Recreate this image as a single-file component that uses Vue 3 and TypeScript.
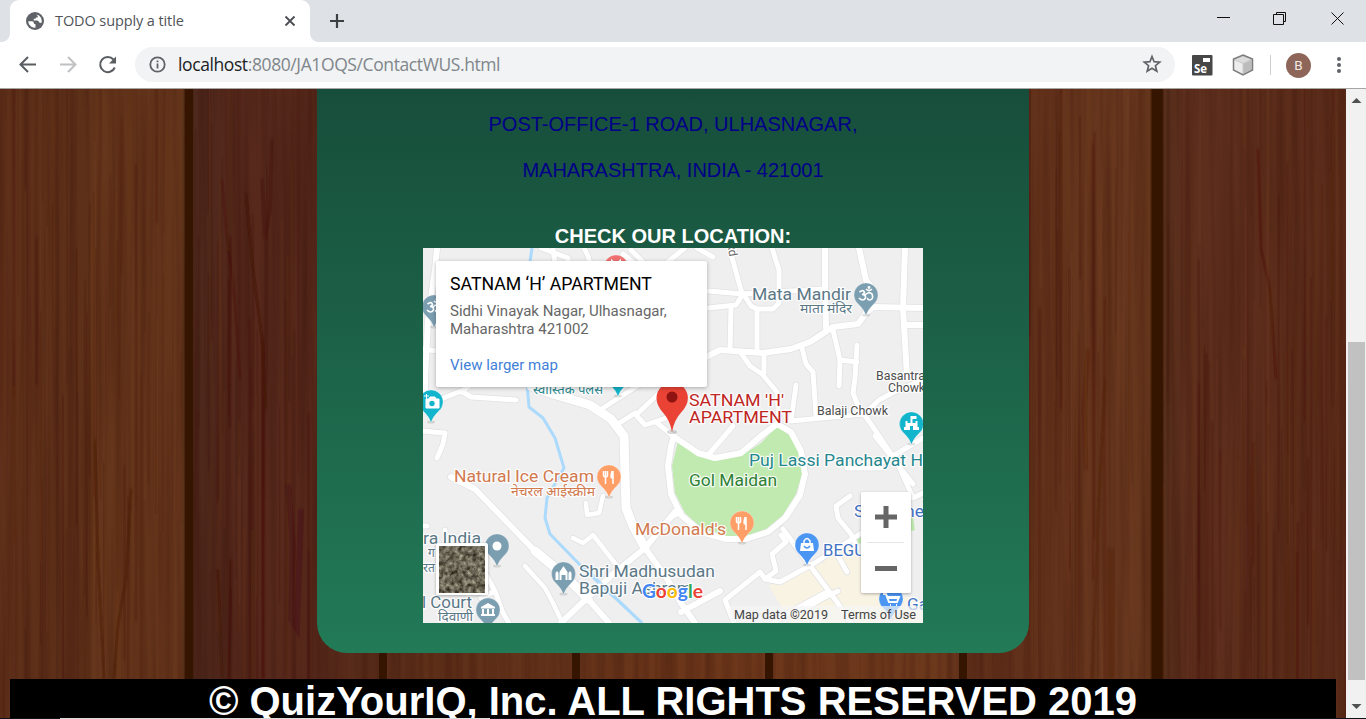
<script setup lang="ts">
interface Pin { x: number; y: number; color: string; icon: string }
interface Label { x: number; y: number; text: string; size: number; color: string; width?: number }
interface Streak { d: string; w: number; o: number; c: string }

const roads: { d: string; w: number }[] = [
  { d: 'M14 0L12 22L5 72L2 130V160', w: 6 },
  { d: 'M0 101L14 103M118 0L145 10V16M130 0L132 16M161 0L165 8L167 16M200 6L212 16M208 2L222 16M262 0L242 16M274 0L290 9', w: 5 },
  { d: 'M18 151L38 143L48 149L93 152M38 144L50 135M0 183L22 185L20 196L14 210M0 278H4', w: 5 },
  { d: 'M108 138L130 146L167 157L188 171L201 188L203 260L210 278L222 300', w: 9 },
  { d: 'M180 160L216 137M195 176L212 165M234 147L213 167L222 177L243 170', w: 5 },
  { d: 'M308 6L318 42L328 58L334 61L350 61L356 55V22L349 0', w: 5 },
  { d: 'M285 43L320 46L400 41M285 60L313 57L320 46M308 60L307 101M334 61V103', w: 5 },
  { d: 'M283 109L297 102L340 105L368 101L387 94L410 79L435 76L443 65L450 59L500 60', w: 6 },
  { d: 'M402 0V40L403 80M436 0L443 32L447 37L443 62M482 0L480 60L484 128M482 77H500', w: 6 },
  { d: 'M410 82L417 112L416 138M417 112L434 114M434 97L432 130L430 145L435 158L441 166L456 152L475 142L500 132', w: 5 },
  { d: 'M379 100L383 116L390 124L393 168M318 105L327 118L339 126L354 144L356 174M341 107V125', w: 5 },
  { d: 'M373 137L368 173L441 166L456 188L476 218L490 250L500 245M452 188L490 236M500 190L460 214M458 220L424 220', w: 5 },
  { d: 'M28 229L52 241L80 270L112 303L142 328L165 351L186 375', w: 6 },
  { d: 'M112 303L142 328L165 351', w: 9 },
  { d: 'M252 264L222 300L190 326L163 351L138 375M222 300L245 332L258 355L272 375M258 364L297 343', w: 6 },
  { d: 'M102 318L122 340L130 355L138 372M150 290L160 295L170 287L184 305L196 320M163 255L164 267L176 265L180 248', w: 4.5 },
  { d: 'M62 325L72 343L80 365L86 375M58 350L72 343M22 282V294', w: 5 },
  { d: 'M250 188L275 205L292 210L318 205L338 188L354 176L368 184L378 203L382 226L377 247L362 270L345 284L323 291L303 291L278 284L258 267L248 246L245 218L248 198L251 188', w: 6 },
  { d: 'M250 188L233 174M286 206L310 178M250 268L258 264', w: 5 },
  { d: 'M360 281L385 315L414 354L428 375M358 287L363 294L349 306L353 323L342 331L337 324L302 352L311 375M342 331L357 334L390 316L440 284L485 262', w: 5 },
  { d: 'M427 248L413 258L415 270L428 286L434 300M414 306L424 324M402 345L367 364L350 375M415 343L400 350L380 362', w: 5 },
]
const pins: Pin[] = [
  { x: 193, y: 19, color: '#f0716f', icon: 'M' },
  { x: 11, y: 59, color: '#7b9eb0', icon: 'om' },
  { x: 8, y: 154, color: '#12b5cb', icon: 'camera' },
  { x: 195, y: 128, color: '#12b5cb', icon: '' },
  { x: 443, y: 47, color: '#7b9eb0', icon: 'om' },
  { x: 488.5, y: 176, color: '#12b5cb', icon: 'fort' },
  { x: 186, y: 229, color: '#ff9e67', icon: 'food' },
  { x: 319, y: 275, color: '#ff9e67', icon: 'food' },
  { x: 74, y: 298, color: '#7b9eb0', icon: 'dot' },
  { x: 140.5, y: 326, color: '#7b9eb0', icon: 'temple' },
  { x: 65, y: 362, color: '#7b9eb0', icon: 'court' },
  { x: 384, y: 297, color: '#4b96f3', icon: 'bag' },
  { x: 468, y: 351, color: '#4b96f3', icon: 'cart' },
]
const slate = '#5b7887'
const labels: Label[] = [
  { x: 329, y: 52, text: 'Mata Mandir', size: 17, color: slate, width: 99 },
  { x: 377, y: 65, text: 'माता मंदिर', size: 12, color: slate, width: 52 },
  { x: 453, y: 132, text: 'Basantra', size: 12, color: '#4d4d4d', width: 49 },
  { x: 465, y: 144, text: 'Chowk', size: 12, color: '#4d4d4d', width: 37 },
  { x: 394, y: 167, text: 'Balaji Chowk', size: 12, color: '#4d4d4d', width: 71 },
  { x: 266, y: 158, text: "SATNAM 'H'", size: 17, color: '#c0261f', width: 95 },
  { x: 266, y: 175, text: 'APARTMENT', size: 17, color: '#c0261f', width: 103 },
  { x: 326, y: 218, text: 'Puj Lassi Panchayat H', size: 17, color: '#26878f', width: 174 },
  { x: 266, y: 238, text: 'Gol Maidan', size: 17, color: '#2f8036', width: 88 },
  { x: 31, y: 234, text: 'Natural Ice Cream', size: 17, color: '#d2794e', width: 140 },
  { x: 88, y: 248, text: 'नेचरल आईस्क्रीम', size: 12, color: '#d2794e', width: 84 },
  { x: 212, y: 287, text: "McDonald's", size: 17, color: '#d2794e', width: 91 },
  { x: 0, y: 296, text: 'ra India', size: 17, color: slate, width: 58 },
  { x: 5, y: 309, text: 'ग', size: 12, color: slate },
  { x: 0, y: 324, text: 'रत', size: 12, color: slate },
  { x: 156, y: 329, text: 'Shri Madhusudan', size: 17, color: slate, width: 136 },
  { x: 156, y: 346, text: 'Bapuji Ashram', size: 17, color: slate, width: 113 },
  { x: -1, y: 360, text: 'l Court', size: 17, color: slate, width: 50 },
  { x: 15, y: 373, text: 'दिवाणी', size: 12, color: slate, width: 35 },
  { x: 110, y: 146, text: 'स्वास्तिक पॅलेस', size: 12, color: '#26878f', width: 70 },
  { x: 400, y: 308, text: 'BEGU', size: 17, color: '#4272c4', width: 42 },
  { x: 431, y: 269, text: 'Supreme', size: 17, color: '#4272c4', width: 70 },
  { x: 484, y: 362, text: 'Ga', size: 17, color: '#4272c4', width: 21 },
]

let seed = 7
function rnd(): number {
  seed = (seed * 16807) % 2147483647
  return seed / 2147483647
}
const streaks: Streak[] = []
for (let i = 0; i < 240; i++) {
  const left = rnd() < 0.5
  const x = left ? rnd() * 317 : 1029 + rnd() * 317
  const y = rnd() * 560 - 90
  const l = 120 + rnd() * 360
  const dark = rnd() < 0.62
  streaks.push({
    d: `M${x.toFixed(1)} ${y.toFixed(0)}v${l.toFixed(0)}`,
    w: 1 + rnd() * 2.5,
    o: dark ? 0.06 + rnd() * 0.14 : 0.05 + rnd() * 0.1,
    c: dark ? '#3d0d04' : '#79442a',
  })
}
const knots: Streak[] = [
  { d: 'M246 105L253 180L262 250L266 320', w: 3, o: 0.45, c: '#430f06' },
  { d: 'M262 90L265 150L270 120L272 50', w: 4, o: 0.22, c: '#3b0d0b' },
  { d: 'M222 90L226 140L234 200L240 290', w: 3, o: 0.25, c: '#430f0a' },
  { d: 'M95 350L98 470L104 590', w: 3, o: 0.4, c: '#471604' },
  { d: 'M131 400L126 490L118 535L114 590', w: 3, o: 0.4, c: '#471604' },
  { d: 'M263 250V590', w: 3, o: 0.4, c: '#430f06' },
  { d: 'M288 395L293 455L291 530L297 540L301 420', w: 6, o: 0.3, c: '#431015' },
  { d: 'M231 470L229 590M218 480L222 590', w: 3, o: 0.35, c: '#3d1007' },
  { d: 'M1258 60L1261 160L1270 200L1276 290', w: 3, o: 0.3, c: '#481208' },
  { d: 'M1105 290L1098 430L1092 590', w: 3, o: 0.35, c: '#4f1d08' },
  { d: 'M1088 260L1084 320L1086 380', w: 5, o: 0.2, c: '#501a07' },
  { d: 'M1111 460V590', w: 7, o: 0.3, c: '#501a07' },
]
</script>

<template>
  <div class="window">
    <div class="tabstrip">
      <div class="tab">
        <svg class="globe" width="18" height="18" viewBox="0 0 18 18">
          <circle cx="9" cy="9" r="9" fill="#5f6368" />
          <path d="M2.300 9.200H6.200Q7.800 9.400 7.800 11Q8 12.200 9.500 12.300V15.600Q5.500 16 3.300 12.700Q2.300 11 2.300 9.200ZM10.200 2.400Q13.500 2.900 15 5.700Q16.300 8.600 15.300 11.300Q14.600 10.400 13.200 10.400Q12.700 8.600 11 8.500H7.700V6.700H9.300Q10 6.500 10 5.600H11.700Q12.500 4 10.200 2.400Z" fill="#fff" />
        </svg>
        <span class="title">TODO supply a title</span>
        <svg class="close" width="12" height="12" viewBox="0 0 12 12"><path d="M1.500 1.500L10.500 10.500M10.500 1.500L1.500 10.500" stroke="#4a4d51" stroke-width="1.800" /></svg>
      </div>
      <div class="newtab">
        <svg width="16" height="16" viewBox="0 0 16 16"><path d="M8 1V15M1 8H15" stroke="#3c4043" stroke-width="2.200" /></svg>
      </div>
      <svg class="controls" width="146" height="42" viewBox="0 0 146 42">
        <path d="M-3 17.500H10M53.500 14.500H63.500V24.500H53.500ZM56.500 14.500V12.500H65.500V21.500H63.500M111.500 12.500L123.500 24.500M123.500 12.500L111.500 24.500" fill="none" stroke="#111" />
      </svg>
    </div>

    <div class="toolbar">
      <svg class="nav" width="135" height="46" viewBox="0 0 135 46">
        <g fill="none" stroke-width="2">
          <path d="M36 22.500H21M28 15L20.500 22.500L28 30" stroke="#5a5d61" />
          <path d="M60 22.500H75M68 15L75.500 22.500L68 30" stroke="#c0c1c3" />
          <path d="M113.500 17.500A7.600 7.600 0 1 0 114.800 25.500" stroke="#5a5d61" />
          <path d="M116 14.500V21.500H109Z" fill="#5a5d61" />
        </g>
      </svg>
      <div class="address">
        <svg width="17" height="17" viewBox="0 0 17 17"><circle cx="8.500" cy="8.500" r="7.200" fill="none" stroke="#5f6368" stroke-width="1.800" /><path d="M8.500 7.500V12.500M8.500 4.500V6.200" stroke="#5f6368" stroke-width="1.800" /></svg>
        <span class="url"><b>localhost</b>:8080/JA1OQS/ContactWUS.html</span>
        <svg class="star" width="20" height="20" viewBox="0 0 20 20"><path d="M10 2.500L12.100 7.700L17.700 8.100L13.400 11.700L14.800 17.200L10 14.200L5.200 17.200L6.600 11.700L2.300 8.100L7.900 7.700Z" fill="none" stroke="#5f6368" stroke-width="1.700" /></svg>
      </div>
      <div class="extensions">
        <svg width="21" height="21" viewBox="0 0 21 21">
          <rect width="20.500" height="20.500" rx="1" fill="#474747" />
          <rect x="11" y="3" width="7" height="4" fill="#fff" />
          <text x="2" y="18" font-size="11.500" class="se">Se</text>
        </svg>
        <svg width="22" height="22" viewBox="0 0 22 22">
          <path d="M11 1L20.500 5V16L11 21L1.500 16V5Z" fill="#c9c9c9" stroke="#7d7d7d" stroke-width="1.500" />
          <path d="M11 2.500L18.500 5.600L11 9L3.500 5.600Z" fill="#dcdcdc" />
          <path d="M2.500 6.300L10.500 9.800V19.600L2.500 15.500Z" fill="#ededed" />
          <path d="M11.500 9.800L19.500 6.300V15.500L11.500 19.600Z" fill="#bcbcbc" />
        </svg>
        <i class="divider"></i>
        <span class="avatar">B</span>
        <svg width="6" height="18" viewBox="0 0 6 18"><g fill="#5f6368"><circle cx="3" cy="3" r="2" /><circle cx="3" cy="9" r="2" /><circle cx="3" cy="15" r="2" /></g></svg>
      </div>
    </div>

    <div class="viewport">
      <main class="page">
        <svg class="wood" width="1346" height="630" viewBox="0 0 1346 630">
          <defs>
            <linearGradient id="planks" gradientUnits="userSpaceOnUse" x1="0" y1="0" x2="1346" y2="0">
              <stop offset="0" stop-color="#5f301a" /><stop offset=".064" stop-color="#5d3019" />
              <stop offset=".069" stop-color="#65361b" /><stop offset=".1345" stop-color="#65351b" />
              <stop offset=".1365" stop-color="#593319" /><stop offset=".138" stop-color="#341400" />
              <stop offset=".1425" stop-color="#3a1700" /><stop offset=".144" stop-color="#4d281c" />
              <stop offset=".18" stop-color="#56291c" /><stop offset=".235" stop-color="#55281a" />
              <stop offset=".29" stop-color="#5c2f1a" /><stop offset=".5" stop-color="#6b361a" />
              <stop offset=".7" stop-color="#6d391d" /><stop offset=".72" stop-color="#60301a" />
              <stop offset=".765" stop-color="#62311b" /><stop offset=".82" stop-color="#69381e" />
              <stop offset=".854" stop-color="#67371d" /><stop offset=".856" stop-color="#3b1900" />
              <stop offset=".863" stop-color="#3b1600" /><stop offset=".865" stop-color="#542e1b" />
              <stop offset=".88" stop-color="#5e2f1d" /><stop offset="1" stop-color="#5b2c19" />
            </linearGradient>
            <filter id="grain" x="0" y="0" width="100%" height="100%" color-interpolation-filters="sRGB">
              <feTurbulence type="fractalNoise" baseFrequency=".13 .003" numOctaves="3" seed="4" />
              <feColorMatrix values="0 0 0 0 .2  0 0 0 0 .05  0 0 0 0 .02  1.400 0 0 0 -.5" />
            </filter>
            <filter id="soft" filterUnits="userSpaceOnUse" x="0" y="0" width="1346" height="630"><feGaussianBlur stdDeviation=".7 1.500" /></filter>
          </defs>
          <rect width="1346" height="630" fill="url(#planks)" />
          <rect width="1346" height="630" filter="url(#grain)" opacity=".45" />
          <g fill="none" filter="url(#soft)">
            <path v-for="(s, i) in streaks" :key="i" :d="s.d" :stroke="s.c" :stroke-width="s.w" :opacity="s.o" />
            <path v-for="(s, i) in knots" :key="'k' + i" :d="s.d" :stroke="s.c" :stroke-width="s.w" :opacity="s.o" />
          </g>
          <path d="M185.500 0H193V630H185.500ZM379 0H387V630H379ZM572 0H580V630H572ZM765 0H773V630H765ZM959 0H967V630H959ZM1152 0H1162.500V630H1152Z" fill="#361500" />
        </svg>

        <section class="panel">
          <p class="line">POST-OFFICE-1 ROAD, ULHASNAGAR,</p>
          <p class="line second">MAHARASHTRA, INDIA - 421001</p>
          <h2>CHECK OUR LOCATION:</h2>
          <div class="map">
            <svg class="tiles" width="500" height="375" viewBox="0 0 500 375">
              <defs>
                <filter id="aerial" x="0" y="0" width="100%" height="100%" color-interpolation-filters="sRGB">
                  <feTurbulence type="fractalNoise" baseFrequency=".22" numOctaves="4" seed="9" />
                  <feColorMatrix values=".7 .2 0 0 -.03  .7 .2 0 0 -.05  .65 .2 0 0 -.09  0 0 0 0 1" />
                </filter>
                <filter id="shadow" x="-20%" y="-20%" width="140%" height="140%">
                  <feDropShadow dx="0" dy="1" stdDeviation="1.500" flood-opacity=".3" />
                </filter>
              </defs>
              <rect width="500" height="375" fill="#f0eff0" />
              <path d="M346 338L395 312L440 340L500 352V375H368Z" fill="#f8f3e3" />
              <path d="M398 310L425 297L460 330V365L430 360Z" fill="#f8f3e3" />
              <path d="M426 293L462 268L490 268L492 282L460 291L430 297Z" fill="#c0eab0" />
              <g fill="none" stroke="#e1e1e4" stroke-linejoin="round" stroke-linecap="round">
                <path v-for="(r, i) in roads" :key="i" :d="r.d" :stroke-width="r.w + 1.500" />
              </g>
              <path d="M255 193L275 208L292 213L318 208L338 195L354 178L367 188L376 205L379 226L373 246L360 267L343 281L323 288L303 288L280 281L262 265L252 245L249 218Z" fill="#c0eab0" />
              <path d="M109 0L107 14M104 135L106 159L120 170L132 190L141 220L124 250L122 270L127 286L160 320L219 375" fill="none" stroke="#abdafc" stroke-width="3" stroke-linejoin="round" />
              <g fill="none" stroke="#fff" stroke-linejoin="round" stroke-linecap="round">
                <path v-for="(r, i) in roads" :key="i" :d="r.d" :stroke-width="r.w" />
              </g>
              <path d="M162 320L219 375" fill="none" stroke="#abdafc" stroke-width="3" opacity=".75" />

              <g class="labels">
                <text
                  v-for="(l, i) in labels" :key="i" :x="l.x" :y="l.y" :font-size="l.size" :fill="l.color"
                  :textLength="l.width" lengthAdjust="spacingAndGlyphs"
                >{{ l.text }}</text>
                <text x="304" y="-5" font-size="12" fill="#666" transform="rotate(80 304 -5)">Rd</text>
              </g>

              <g v-for="(p, i) in pins" :key="'p' + i" :transform="`translate(${p.x} ${p.y})`">
                <ellipse cy="20" rx="4" ry="1.500" fill="#000" opacity=".12" />
                <path d="M0 20.500Q-2 14.500-7.600 9.200A12 12 0 1 1 7.600 9.200Q2 14.500 0 20.500Z" :fill="p.color" stroke="#fff" stroke-opacity=".5" stroke-width=".6" />
                <g v-if="p.icon === 'food'" fill="none" stroke="#fff">
                  <path d="M-5.500-6V-2Q-5.500 0-3.500 0T-1.500-2V-6M-3.500-6V7M4-6V7" stroke-width="1.500" />
                  <path d="M3-6Q1.500-4 2 1H4Z" fill="#fff" />
                </g>
                <circle v-else-if="p.icon === 'dot'" r="4.500" fill="#fff" />
                <g v-else-if="p.icon === 'camera'" transform="translate(1 0)">
                  <path d="M-6-3H-3L-2-5H3L4-3H7V6H-6ZM-8-6H-3M-5.500-8V-3" fill="#fff" stroke="#fff" stroke-width="1" /><circle cy="1.500" r="2.700" fill="#12b5cb" />
                </g>
                <path v-else-if="p.icon === 'fort'" d="M-7.500 6V3H-6V-3H-4V-1H-1V-8H5V-5H1V-1H4V-3H6V3H7.500V6H1.500V2H-1.500V6Z" fill="#fff" />
                <path v-else-if="p.icon === 'temple'" d="M-8 6V-1L-6.500-3L-5-1V6ZM-4 6V-2L0-8L4-2V6H2V1H-2V6ZM5 6V-1L6.500-3L8-1V6Z" fill="#fff" />
                <path v-else-if="p.icon === 'court'" d="M-7-3L0-7L7-3V-1.500H-7ZM-6-1H-4V4H-6ZM-1-1H1V4H-1ZM4-1H6V4H4ZM-7 4H7V6H-7Z" fill="#fff" />
                <g v-else-if="p.icon === 'bag'">
                  <path d="M-6-2H6L7 6H-7Z" fill="#fff" /><path d="M-3-2V-4Q0-9 3-4V-2" fill="none" stroke="#fff" stroke-width="1.500" /><path d="M-3 1Q0 5 3 1" fill="none" stroke="#4b96f3" stroke-width="1.500" />
                </g>
                <path v-else-if="p.icon === 'cart'" d="M-8-5H-5L-2 3H6L8-2H-4M-4-1H7M-1 6H0M5 6H6" fill="none" stroke="#fff" stroke-width="2" />
                <g v-else-if="p.icon === 'om'" fill="none" stroke="#fff" stroke-width="1.700">
                  <path d="M-6.500-3Q-2.500-6-1.500-2.500Q-2-.5-4-.5Q0-.5-.5 3Q-3 7-7 3M-1 0Q3-4 6-1Q8 4 4 5Q1 5 2 3M0-6Q3-3 6-6" /><circle cx="3" cy="-7.500" r=".6" />
                </g>
                <path v-else-if="p.icon === 'M'" d="M-4 2V-6L0-2L4-6V2" fill="none" stroke="#fff" stroke-width="2" />
              </g>

              <ellipse cx="249" cy="184" rx="5" ry="2" fill="#000" opacity=".15" />
              <path d="M249 184Q247 172 239.500 164Q233.500 157 233.500 150A15.700 15.700 0 0 1 264.900 150Q264.900 157 258.500 164Q251 172 249 184Z" fill="#ea4335" />
              <circle cx="249" cy="149" r="5.500" fill="#8f1411" />

              <text class="google" x="219" y="349.500" font-size="18.500" textLength="61" lengthAdjust="spacingAndGlyphs"><tspan fill="#4285f4">G</tspan><tspan fill="#ea4335">o</tspan><tspan fill="#fbbc05">o</tspan><tspan fill="#4285f4">g</tspan><tspan fill="#34a853">l</tspan><tspan fill="#ea4335">e</tspan></text>
              <rect x="307" y="358" width="193" height="17" fill="#f5f5f5" opacity=".7" />
              <text class="legal" x="311" y="371" font-size="13" textLength="94" lengthAdjust="spacingAndGlyphs">Map data ©2019</text>
              <text class="legal" x="418" y="371" font-size="13" textLength="75" lengthAdjust="spacingAndGlyphs">Terms of Use</text>
              <g filter="url(#shadow)"><rect x="13" y="295" width="52" height="52" rx="2" fill="#fff" /></g>
              <rect x="16" y="298" width="46" height="47" filter="url(#aerial)" />
              <g filter="url(#shadow)"><rect x="438" y="244" width="50" height="101" rx="2" fill="#fff" /></g>
              <path d="M444 294.500H481" stroke="#e6e6e6" />
              <path d="M452 269H474M463 258V280M452 320.500H474" stroke="#666" stroke-width="5" />
            </svg>
            <div class="card">
              <h3>SATNAM ‘H’ APARTMENT</h3>
              <p>Sidhi Vinayak Nagar, Ulhasnagar,<br />Maharashtra 421002</p>
              <a>View larger map</a>
            </div>
          </div>
        </section>
        <footer>© QuizYourIQ, Inc. ALL RIGHTS RESERVED 2019</footer>
      </main>
      <aside class="scrollbar">
        <svg width="20" height="24" viewBox="0 0 20 24"><path d="M5.500 14L10.500 9L15.500 14Z" fill="#505050" /></svg>
        <div class="track"><div class="thumb"></div></div>
        <svg width="20" height="24" viewBox="0 0 20 24"><path d="M5.500 10L10.500 15L15.500 10Z" fill="#505050" /></svg>
      </aside>
    </div>
    <div class="edge"><i></i></div>
  </div>
</template>

<style>
html, body { overflow: hidden; }
</style>

<style scoped>
* { box-sizing: border-box; }
.window { display: flex; flex-direction: column; width: 1366px; height: 719px; overflow: hidden; background: #fff; font-family: "Liberation Sans", Arial, sans-serif; }
.tabstrip { display: flex; align-items: center; height: 42px; background: #dee1e6; padding-left: 10px; }
.tab { position: relative; display: flex; align-items: center; width: 300px; height: 42px; padding: 0 14px 0 16px; background: #fff; border-radius: 9px 9px 0 0; }
.tab::before, .tab::after { content: ""; position: absolute; bottom: 0; width: 8px; height: 8px; }
.tab::before { left: -8px; background: radial-gradient(circle at 0 0, transparent 7.5px, #fff 8px); }
.tab::after { right: -8px; background: radial-gradient(circle at 100% 0, transparent 7.5px, #fff 8px); }
.title { margin-left: 11px; font: 14.500px/20px "Open Sans", "Noto Sans", sans-serif; letter-spacing: -.1px; color: #505458; white-space: nowrap; }
.close { margin-left: auto; }
.newtab { display: flex; margin-left: 19px; }
.controls { margin-left: auto; overflow: visible; }
.toolbar { display: flex; align-items: center; height: 47px; border-bottom: 1px solid #a9a5a3; background: #fff; }
.address { display: flex; align-items: center; width: 1040px; height: 35px; margin-top: -2px; padding: 0 13px 0 14px; border-radius: 18px; background: #f1f3f4; }
.url { margin-left: 12px; font: 17.500px/24px "Open Sans", "Noto Sans", sans-serif; letter-spacing: -.4px; color: #80868b; white-space: nowrap; }
.url b { font-weight: 400; color: #202124; }
.star { margin-left: auto; }
.extensions { display: flex; flex: 1; align-items: center; height: 46px; margin-left: 17px; }
.extensions > svg:nth-child(2) { margin-left: 19px; }
.se { font-family: "Open Sans", sans-serif; font-weight: 700; fill: #fff; }
.divider { width: 1px; height: 20px; margin-left: 16px; background: #cfcfd1; }
.avatar { width: 25px; height: 25px; margin-left: 15px; border-radius: 50%; background: #8d6659; color: #f4e9e4; font: 13.500px/25px Roboto, sans-serif; text-align: center; }
.extensions > svg:last-child { margin-left: 25px; }
.viewport { display: flex; height: 629px; }
.page { position: relative; display: flex; flex-direction: column; width: 1346px; height: 629px; overflow: hidden; background: #562817; }
.wood { position: absolute; inset: 0; }
.panel { position: relative; display: flex; flex-direction: column; align-items: center; width: 712px; height: 564px; margin: 0 auto; padding-top: 23px; border-radius: 0 0 30px 30px; background: linear-gradient(#174e3b, #227a57); }
.line { margin: 0; font-size: 20px; line-height: 24px; color: #000088; white-space: nowrap; }
.second { margin-top: 22px; }
h2 { margin: 42px 0 0; font-size: 20px; line-height: 24px; color: #fff; white-space: nowrap; }
.map { position: relative; width: 500px; height: 375px; overflow: hidden; }
.tiles { display: block; font-family: Roboto, "Noto Sans", sans-serif; }
.labels text { paint-order: stroke; stroke: #fff; stroke-width: 2.500px; stroke-linejoin: round; stroke-opacity: .85; }
.google { font-family: Lato, sans-serif; font-weight: 700; paint-order: stroke; stroke: #fff; stroke-width: 2px; }
.legal { fill: #444; }
.card { position: absolute; left: 13px; top: 13px; width: 271px; height: 126px; padding: 13px 14px; border-radius: 2px; background: #fff; box-shadow: 0 1px 4px rgba(0, 0, 0, .3); font-family: Roboto, sans-serif; white-space: nowrap; }
.card h3 { margin: 0; font-weight: 400; font-size: 17.700px; line-height: 20px; color: #000; }
.card p { margin: 8px 0 17px; font-size: 15px; line-height: 18px; color: #666; }
.card a { display: block; font-size: 15px; line-height: 20px; color: #427fd8; }
footer { position: relative; height: 39px; margin: 26px 10px 0; overflow: hidden; background: #000; color: #fff; font-size: 40px; font-weight: 700; line-height: 44px; text-align: center; white-space: nowrap; }
.scrollbar { display: flex; flex-direction: column; width: 20px; height: 629px; background: #f1f1f1; }
.track { flex: 1; padding: 229px 1px 0 2px; }
.thumb { height: 338px; background: #c1c1c1; }
.edge { height: 1px; background: #10101c; }
.edge i { display: block; width: 430px; height: 1px; margin-left: 60px; background: #ddd; }
</style>
